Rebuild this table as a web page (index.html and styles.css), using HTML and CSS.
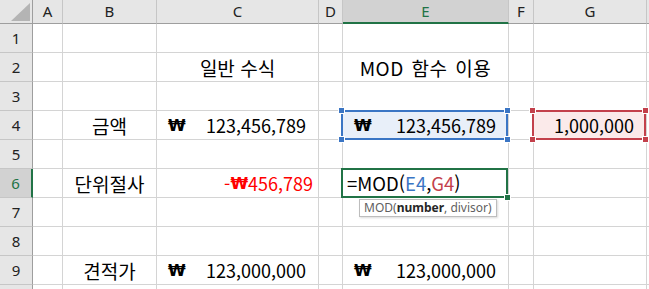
FILE: index.html
```html
<!DOCTYPE html>
<html lang="ko">
<head>
    <meta charset="UTF-8">
    <title>MOD 함수</title>
    <link rel="stylesheet" href="styles.css">
</head>
<body>
    <div class="sheet">
        <!-- column headers -->
        <div class="corner"><span class="tri"></span></div>
        <div class="hd">A</div>
        <div class="hd">B</div>
        <div class="hd">C</div>
        <div class="hd">D</div>
        <div class="hd on">E</div>
        <div class="hd">F</div>
        <div class="hd">G</div>
        <div class="hd"></div>

        <!-- row 1 -->
        <div class="rh">1</div>
        <div class="c"></div><div class="c"></div><div class="c"></div><div class="c"></div>
        <div class="c"></div><div class="c"></div><div class="c"></div><div class="c"></div>

        <!-- row 2 -->
        <div class="rh">2</div>
        <div class="c"></div>
        <div class="c"></div>
        <div class="c mid">일반 수식</div>
        <div class="c"></div>
        <div class="c mid wide">MOD 함수 이용</div>
        <div class="c"></div>
        <div class="c"></div>
        <div class="c"></div>

        <!-- row 3 -->
        <div class="rh">3</div>
        <div class="c"></div><div class="c"></div><div class="c"></div><div class="c"></div>
        <div class="c"></div><div class="c"></div><div class="c"></div><div class="c"></div>

        <!-- row 4 -->
        <div class="rh">4</div>
        <div class="c"></div>
        <div class="c mid">금액</div>
        <div class="c acct"><span class="won">₩</span><span>123,456,789</span></div>
        <div class="c"></div>
        <div class="c acct ref-e">
            <span class="won">₩</span><span>123,456,789</span>
            <div class="frame blue"><i class="tl"></i><i class="tr"></i><i class="bl"></i><i class="br"></i></div>
        </div>
        <div class="c"></div>
        <div class="c num ref-g">
            1,000,000
            <div class="frame red"><i class="tl"></i><i class="tr"></i><i class="bl"></i><i class="br"></i></div>
        </div>
        <div class="c"></div>

        <!-- row 5 -->
        <div class="rh">5</div>
        <div class="c"></div><div class="c"></div><div class="c"></div><div class="c"></div>
        <div class="c"></div><div class="c"></div><div class="c"></div><div class="c"></div>

        <!-- row 6 -->
        <div class="rh on">6</div>
        <div class="c"></div>
        <div class="c mid">단위절사</div>
        <div class="c num neg">-<span class="won">₩</span>456,789</div>
        <div class="c"></div>
        <div class="c edit">
            =MOD(<span class="arg-e">E4</span>,<span class="arg-g">G4</span>)
            <div class="cursor"><i class="fill"></i></div>
            <div class="tip">MOD(<b>number</b>, divisor)</div>
        </div>
        <div class="c"></div>
        <div class="c"></div>
        <div class="c"></div>

        <!-- row 7 -->
        <div class="rh">7</div>
        <div class="c"></div><div class="c"></div><div class="c"></div><div class="c"></div>
        <div class="c"></div><div class="c"></div><div class="c"></div><div class="c"></div>

        <!-- row 8 -->
        <div class="rh">8</div>
        <div class="c"></div><div class="c"></div><div class="c"></div><div class="c"></div>
        <div class="c"></div><div class="c"></div><div class="c"></div><div class="c"></div>

        <!-- row 9 -->
        <div class="rh">9</div>
        <div class="c"></div>
        <div class="c mid">견적가</div>
        <div class="c acct"><span class="won">₩</span><span>123,000,000</span></div>
        <div class="c"></div>
        <div class="c acct"><span class="won">₩</span><span>123,000,000</span></div>
        <div class="c"></div>
        <div class="c"></div>
        <div class="c"></div>

        <!-- row 10, only its top edge shows -->
        <div class="rh"></div>
        <div class="c"></div><div class="c"></div><div class="c"></div><div class="c"></div>
        <div class="c"></div><div class="c"></div><div class="c"></div><div class="c"></div>
    </div>
</body>
</html>
```

FILE: styles.css
```css
body {
    margin: 0;
    background: #fff;
    overflow: hidden;
    font-family: "Noto Sans CJK KR", "Noto Sans", sans-serif;
}
.sheet {
    display: grid;
    grid-template-columns: 33px 30px 94px 162px 24px 166px 25px 113px 1fr;
    grid-template-rows: 24px repeat(10, 29px);
    width: 649px;
    height: 289px;
    overflow: hidden;
}
.sheet > div {
    box-sizing: border-box;
    border-right: 1px solid #d4d4d4;
    border-bottom: 1px solid #d4d4d4;
}

/* headers */
.corner {
    background: #e6e6e6;
    border-right-color: #9e9e9e !important;
    border-bottom-color: #9e9e9e !important;
    position: relative;
}
.tri {
    position: absolute;
    right: 2px;
    bottom: 2px;
    width: 19px;
    height: 18px;
    background: #b4b4b4;
    clip-path: polygon(100% 0, 100% 100%, 0 100%);
}
.hd, .rh {
    background: #e6e6e6;
    font-family: "Noto Sans", "Open Sans", sans-serif;
    font-size: 15px;
    color: #222;
    text-align: center;
}
.hd {
    line-height: 23px;
    border-right-color: #c6c6c6 !important;
    border-bottom-color: #9e9e9e !important;
}
.hd.on {
    background: #d2d2d2;
    color: #217346;
    line-height: 22px;
    border-bottom: 2px solid #217346 !important;
}
.rh {
    line-height: 28px;
    border-right-color: #9e9e9e !important;
    border-bottom-color: #c6c6c6 !important;
}
.rh.on {
    background: #d2d2d2;
    color: #217346;
    border-right: 2px solid #217346 !important;
}

/* cells */
.c {
    display: flex;
    align-items: center;
    padding: 0 4px;
    font-size: 18px;
    color: #000;
    white-space: nowrap;
}
.mid { justify-content: center; font-size: 19px; }
.wide { letter-spacing: 0.5px; word-spacing: 2px; }
.num { justify-content: flex-end; padding-right: 12px; }
.acct { justify-content: space-between; padding: 0 12px 0 11px; }
.neg { color: #ff0000; padding-right: 5px; }
.won {
    font-family: "DejaVu Sans", sans-serif;
    font-weight: 700;
    font-size: 16px;
}

/* formula reference frames */
.ref-e, .ref-g, .edit { position: relative; }
.ref-e { background: #e8eff9; }
.ref-g { background: #fbeaea; }
.frame {
    position: absolute;
    inset: -1px 0 -1px -2px;
    border: 2px solid;
    z-index: 1;
}
.blue { color: #3a75c4; }
.red { color: #c3404b; }
.frame i {
    position: absolute;
    width: 5px;
    height: 5px;
    background: currentColor;
    border: 1px solid #fff;
}
.frame .tl { left: -5px; top: -5px; }
.frame .tr { right: -5px; top: -5px; }
.frame .bl { left: -5px; bottom: -5px; }
.frame .br { right: -5px; bottom: -5px; }

/* cell being edited */
.edit { padding-left: 4px; font-size: 18.5px; }
.arg-e { color: #3a75c4; }
.arg-g { color: #c3404b; }
.cursor {
    position: absolute;
    inset: -1px 0 -1px -2px;
    border: 2px solid #217346;
    z-index: 1;
}
.fill {
    position: absolute;
    right: -5px;
    bottom: -5px;
    width: 5px;
    height: 5px;
    background: #217346;
    border: 1px solid #fff;
}
.tip {
    position: absolute;
    left: 16px;
    top: 30px;
    z-index: 2;
    padding: 0 4px;
    border: 1px solid #bdbdbd;
    background: #fff;
    box-shadow: 1px 1px 2px rgba(0, 0, 0, 0.15);
    font-family: "Noto Sans", "Open Sans", sans-serif;
    font-size: 12px;
    line-height: 16px;
    color: #5f5f5f;
}
.tip b { color: #262626; }
```
